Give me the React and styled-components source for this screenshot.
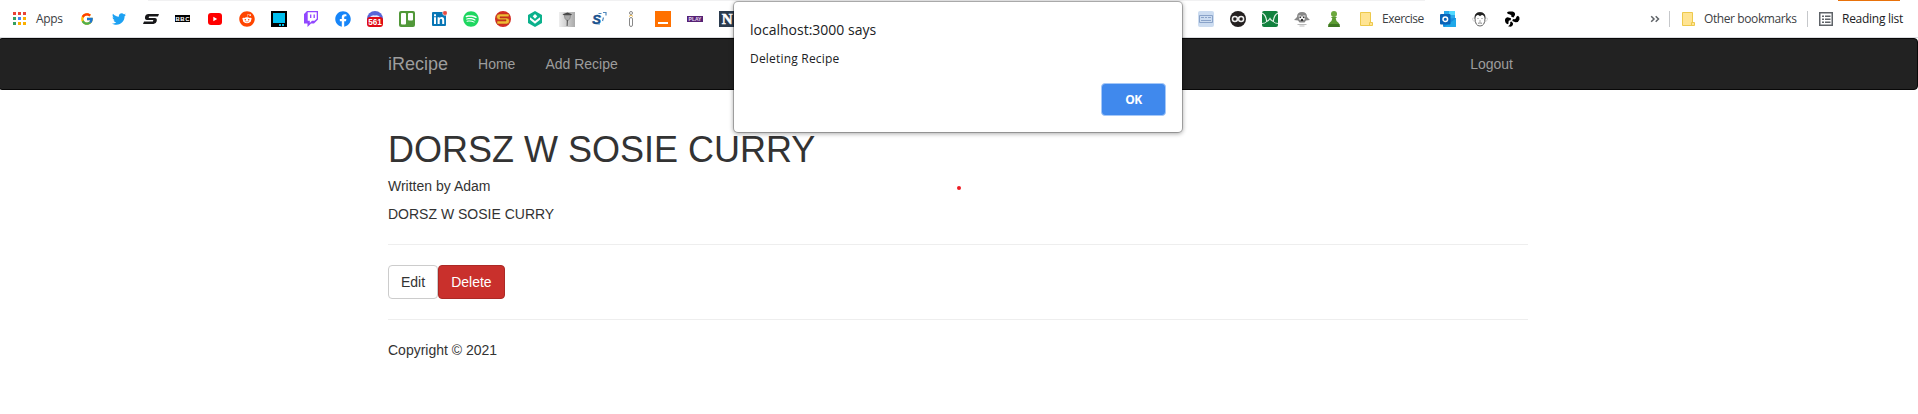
import React from "react";
import styled, { createGlobalStyle } from "styled-components";
import { FcGoogle } from "react-icons/fc";
import { FaTwitter, FaReddit, FaFacebook, FaSpotify } from "react-icons/fa";

const GlobalStyle = createGlobalStyle`
  *, *::before, *::after { box-sizing: border-box; }
  html, body { margin: 0; overflow: hidden; background: #fff; }
  body {
    font-family: "Liberation Sans", Arial, sans-serif;
    font-size: 14px;
    line-height: 20px;
    color: #333;
  }
`;

const uiFont = `"Open Sans", "Noto Sans", sans-serif`;

const Screen = styled.div`
  position: relative;
  width: 1918px;
  height: 414px;
  overflow: hidden;
`;

const TabStrip = styled.div`
  display: flex;
  justify-content: space-between;
  height: 1px;
  padding: 0 18px 0 148px;
`;

const StripEdge = styled.div`
  width: ${(p) => p.$width}px;
  height: 1px;
  background: ${(p) => p.$color};
`;

const BookmarksBar = styled.div`
  display: flex;
  align-items: center;
  height: 37px;
  padding: 0 15px 0 11px;
  border-bottom: 1px solid #dcdde0;
  background: #fff;
`;

const Favicons = styled.div`
  display: flex;
  align-items: center;
  gap: 16px;
  margin-left: ${(p) => p.$left}px;
`;

const Icon = styled.svg.attrs({ viewBox: "0 0 16 16" })`
  display: block;
  flex: none;
  width: 16px;
  height: 16px;
`;

const BrandIcon = styled.span`
  display: flex;
  flex: none;
  align-items: center;
  justify-content: center;
  width: 16px;
  height: 16px;
  color: ${(p) => p.$color};
  font-size: ${(p) => p.$size || 16}px;
  svg { flex: none; }
`;

const BarLabel = styled.span`
  flex: none;
  width: ${(p) => p.$width}px;
  margin-left: ${(p) => p.$left}px;
  font: 12px/16px ${uiFont};
  letter-spacing: ${(p) => p.$spacing || 0}px;
  white-space: nowrap;
  color: ${(p) => p.$color || "#3c4043"};
`;

const BarEnd = styled.div`
  display: flex;
  align-items: center;
  margin-left: auto;
`;

const Divider = styled.div`
  width: 1px;
  height: 16px;
  margin: 0 ${(p) => p.$right}px 0 ${(p) => p.$left}px;
  background: #c6c8cb;
`;

const Navbar = styled.nav`
  height: 52px;
  margin: 0 0 40px -2px;
  width: 1920px;
  border: 1px solid #080808;
  border-radius: 4px;
  background: #222;
`;

const NavInner = styled.div`
  display: flex;
  align-items: center;
  width: 1140px;
  height: 50px;
  margin-left: 389px;
  color: #9d9d9d;
`;

const Brand = styled.a`
  padding-right: 15px;
  font-size: 18px;
`;

const NavLink = styled.a`
  padding: 0 15px;
  margin-left: ${(p) => (p.$right ? "auto" : 0)};
`;

const Container = styled.main`
  width: 1140px;
  margin-left: 388px;
`;

const Title = styled.h1`
  margin: 0 0 6px;
  font-size: 36px;
  font-weight: 500;
  line-height: 40px;
`;

const Paragraph = styled.p`
  margin: 0 0 ${(p) => p.$gap || 0}px;
`;

const Rule = styled.hr`
  margin: 20px 0;
  border: 0;
  border-top: 1px solid #eee;
`;

const Actions = styled.div`
  display: flex;
`;

const Button = styled.button`
  height: 34px;
  padding: 6px 12px;
  border: 1px solid ${(p) => (p.$danger ? "#ac2925" : "#ccc")};
  border-radius: 4px;
  background: ${(p) => (p.$danger ? "#c9302c" : "#fff")};
  color: ${(p) => (p.$danger ? "#fff" : "#333")};
  font: inherit;
`;

const Dialog = styled.div`
  position: absolute;
  top: 2px;
  left: 734px;
  display: flex;
  flex-direction: column;
  width: 448px;
  height: 130px;
  padding: 17px 16px 16px;
  border-radius: 4px;
  background: #fff;
  box-shadow: 0 0 0 1px rgba(0, 0, 0, 0.24), 0 1px 4px 1px rgba(0, 0, 0, 0.32);
  font-family: ${uiFont};
  color: #202124;
`;

const DialogTitle = styled.div`
  font-size: 14px;
  line-height: 22px;
  white-space: nowrap;
`;

const DialogMessage = styled.div`
  margin-top: 9px;
  font-size: 12px;
  line-height: 18px;
  letter-spacing: 0.2px;
  white-space: nowrap;
`;

const DialogButton = styled.button`
  align-self: flex-end;
  width: 65px;
  height: 33px;
  margin-top: auto;
  padding: 0;
  border: 1px solid #a5c8f8;
  border-radius: 4px;
  background: #4089ed;
  color: #fff;
  font: 700 12px/16px ${uiFont};
  letter-spacing: -0.6px;
`;

const Pointer = styled.div`
  position: absolute;
  top: 186px;
  left: 957px;
  width: 4px;
  height: 4px;
  border-radius: 50%;
  background: #ec1c24;
`;

const appColors = ["#ea4335", "#ea4335", "#ea4335", "#34a060", "#4285f4", "#fbaf00", "#34a060", "#fbaf00", "#fbaf00"];

const AppsIcon = () => (
  <Icon>
    {appColors.map((c, i) => (
      <rect key={i} x={2 + (i % 3) * 5} y={1 + Math.floor(i / 3) * 5} width="3" height="3" fill={c} />
    ))}
  </Icon>
);

const FolderIcon = () => (
  <Icon>
    <path d="M2.5 1.5H12.5V11.5H14.5V14.5H2.5Z" fill="#ffe493" stroke="#edc94c" />
    <path d="M11.5 14.5V11.5H13" fill="none" stroke="#edc94c" />
  </Icon>
);

const ReadingListIcon = () => (
  <Icon>
    <rect x="1.75" y="1.75" width="12.5" height="12.5" fill="none" stroke="#5f6368" strokeWidth="1.5" />
    <path d="M4 5.3H6M7 5.3H12.5M4 8.3H6M7 8.3H12.5M4 11.3H6M7 11.3H12.5" stroke="#5f6368" strokeWidth="1.4" />
  </Icon>
);

const Letters = ({ children, ...rest }) => (
  <text textAnchor="middle" fontFamily="Liberation Sans, sans-serif" fontWeight="700" {...rest}>
    {children}
  </text>
);

const LeftFavicons = () => (
  <>
    <BrandIcon $size={14}><FcGoogle /></BrandIcon>
    <BrandIcon $color="#1da1f2" $size={14}><FaTwitter /></BrandIcon>
    <Icon>
      <path d="M16 3H5.5Q2.5 3 2 6Q1.6 8.9 4 8.9H10.3L9.9 10.4H1L0 13H10.5Q13 13 13.7 10.3Q14.4 7 11.8 7H5.7L6 5.5H15Z" fill="#171719" />
    </Icon>
    <Icon>
      <rect x="0" y="4" width="15" height="7" fill="#000" />
      {["B", "B", "C"].map((c, i) => (
        <Letters key={i} x={2.7 + i * 4.8} y="9.8" fontSize="6" fill="#fff">{c}</Letters>
      ))}
    </Icon>
    <Icon>
      <rect x="1" y="2" width="14" height="12" rx="3" fill="#f00" />
      <path d="M6.3 5.7L10.2 8L6.3 10.3Z" fill="#fff" />
    </Icon>
    <BrandIcon $color="#ff4500"><FaReddit /></BrandIcon>
    <Icon>
      <rect width="16" height="16" />
      <rect x="2" y="2" width="12" height="10" fill="#00bfee" />
      <path d="M8 13h2v2h-2zM11 13h2v2h-2z" fill="#00bfee" />
    </Icon>
    <Icon>
      <path d="M4 0H15V8.5L11 12.5H8L4.5 16V12.5H1V3Z" fill="#9147ff" />
      <path d="M4.7 1.2H13.7V7.7L11.5 9.8H9L6.8 12V9.8H4.7Z" fill="#fff" />
      <path d="M7.7 3.5V7M11.2 3.5V7" stroke="#9147ff" strokeWidth="1.3" />
    </Icon>
    <BrandIcon $color="#1685f8"><FaFacebook /></BrandIcon>
    <Icon>
      <circle cx="8" cy="8" r="8" fill="#5865d8" />
      <path d="M3 6Q5 3.8 8 4.5Q11 3.8 13 6V8H3Z" fill="#e7e9fb" />
      <rect x="0" y="6" width="16" height="10" rx="3" fill="#df0b16" />
      <Letters x="8" y="14" fontSize="8.2" fill="#fff">561</Letters>
    </Icon>
    <Icon>
      <rect width="16" height="16" rx="2" fill="#519839" />
      <rect x="2" y="2" width="5" height="11.5" rx="1" fill="#fff" />
      <rect x="9" y="2" width="5" height="7.5" rx="1" fill="#fff" />
    </Icon>
    <Icon>
      <rect x="1" y="1" width="14" height="14" rx="1" fill="#0876b5" />
      <path d="M3 6.3H5V13H3zM3 3.3H5V5.2H3zM6.6 6.3H8.6V7.2Q9.3 6.1 10.8 6.1Q13.2 6.1 13.2 9V13H11.2V9.4Q11.2 7.8 10 7.8Q8.7 7.8 8.7 9.5V13H6.6Z" fill="#fff" />
      <circle cx="14" cy="2" r="2.4" fill="#e74a40" stroke="#fff" strokeWidth=".6" />
    </Icon>
    <BrandIcon $color="#1ed760"><FaSpotify /></BrandIcon>
    <Icon>
      <circle cx="8" cy="8" r="8" fill="#d52d25" />
      <path d="M14 3H4.5Q1.5 3 1.5 5.7Q1.5 8.7 4.5 8.7H11V10H2V13H11.5Q14.5 13 14.5 10Q14.5 7 11.5 7H5V5.8H14Z" fill="#f2ba35" stroke="#a43213" strokeWidth=".5" />
    </Icon>
    <Icon>
      <path d="M8 0L15 4V12L8 16L1 12V4Z" fill="#0bb18c" />
      <path d="M3 6.2L8 10L13 6.2V8.8L8 12.8L3 8.8Z" fill="#fff" />
      <path d="M8 3L10.3 5.3L8 7.8L5.7 5.3Z" fill="#fff" />
    </Icon>
    <Icon>
      <defs>
        <linearGradient id="photo"><stop stopColor="#eee" /><stop offset="1" stopColor="#aaa" /></linearGradient>
      </defs>
      <rect y="1" width="16" height="15" fill="url(#photo)" />
      <path d="M3.5 3.2L8.5 1.5L13 3.2L12 4.3H5Z" fill="#444" />
      <path d="M5.3 4.3H11.5L11 7.2L9.3 9.5H7.8L6 7.5Z" fill="#aaa" stroke="#777" strokeWidth=".6" />
      <path d="M7.8 8.5L9 9.5L8.6 15H7.6Z" fill="#555" />
    </Icon>
    <Icon>
      <Letters x="5.5" y="12.8" fontSize="13" fontStyle="italic" stroke="#17518d" strokeWidth=".5" fill="#17518d">S</Letters>
      <path d="M7.5 2.5H10.5M12 1.5H15V4.5M9 13H6.5M12.5 6.5L11.5 10" stroke="#5089bd" strokeWidth="1.2" fill="none" />
    </Icon>
    <Icon>
      <circle cx="8" cy="2" r="1.5" fill="#fff" stroke="#888" />
      <path d="M6 5.5L8 4L10 5.5" fill="none" stroke="#efb94c" />
      <rect x="6.5" y="6.5" width="3" height="9" rx="1.5" fill="#fff" stroke="#888" />
    </Icon>
    <Icon>
      <rect width="16" height="16" fill="#ff7100" />
      <rect x="3" y="11" width="10" height="2" fill="#fff" />
    </Icon>
    <Icon>
      <rect y="5" width="16" height="6" fill="#562274" />
      <Letters x="8" y="10" fontSize="5" fill="#e8d8f2">PLAY</Letters>
    </Icon>
    <Icon>
      <rect width="16" height="16" fill="#2b3b4e" />
      <Letters x="8.2" y="13.3" fontSize="15" fill="#fff" stroke="#fff" strokeWidth=".5" fontFamily="Liberation Serif, serif">N</Letters>
    </Icon>
  </>
);

const RightFavicons = () => (
  <>
    <Icon>
      <rect width="16" height="16" rx="2" fill="#ccdcf0" />
      <path d="M1.5 4.5H14.5V11.5H1.5Z" fill="none" stroke="#8aa3c9" />
      <path d="M3 6.5H6M7 6.5H9M10 6.5H13M3 9.5H13" fill="none" stroke="#8aa3c9" />
    </Icon>
    <Icon>
      <circle cx="8" cy="8" r="8" fill="#242020" />
      <circle cx="4.9" cy="8" r="2.5" fill="none" stroke="#eee" strokeWidth="1.5" />
      <circle cx="11.1" cy="8" r="2.5" fill="none" stroke="#eee" strokeWidth="1.5" />
      <path d="M6.7 9.8L9.3 6.2" stroke="#eee" strokeWidth="1.3" />
    </Icon>
    <Icon>
      <rect width="16" height="16" rx="2" fill="#12813e" />
      <path d="M0 2Q4 3.5 4.7 10.5Q6.5 10 8 7.5Q9.5 10 11.3 10.5Q12 3.5 16 2" fill="none" stroke="#e4f3e9" strokeWidth="1.2" />
      <path d="M0 12.5Q3 12.5 4.7 10.5M16 12.5Q13 12.5 11.3 10.5" fill="none" stroke="#e4f3e9" strokeWidth=".9" />
    </Icon>
    <Icon>
      <path d="M3 6Q3 1 8 1Q13 1 13 6L16 9L12 9.5L10.5 11.5H5.5L4 9.5L0 9Z" fill="#888" />
      <path d="M4.5 4.5H7L8 6L9 4.5H11.5L10.5 9H5.5Z" fill="#eee" />
      <path d="M5.5 5.5H7V7H5.5zM9 5.5H10.5V7H9zM7 8H9V10H7z" fill="#333" />
      <path d="M3.5 13.5H12.5M5.5 15H10.5" stroke="#bbb" />
    </Icon>
    <Icon>
      <circle cx="8" cy="3" r="3" fill="#6ca83d" />
      <path d="M4.8 6H11.2L9.7 7.3Q9.8 10 12.5 11.7Q14 13 13.8 16H2.2Q2 13 3.5 11.7Q6.2 10 6.3 7.3Z" fill="#5b9b32" />
      <path d="M2.7 13H13.3L13.8 16H2.2Z" fill="#3e7822" />
    </Icon>
  </>
);

const OutlookIcon = () => (
  <Icon>
    <path d="M4 0H15V8H4Z" fill="#28a8ea" />
    <path d="M9 0H15V4H9Z" fill="#50d9ff" />
    <path d="M3 8L16 7V15Q16 16 15 16H4Q3 16 3 15Z" fill="#148ede" />
    <path d="M4 16L16 7.5V15Q16 16 15 16Z" fill="#1fa8e9" />
    <rect y="3" width="10.5" height="10.5" rx="1" fill="#0a64b8" />
    <circle cx="5.3" cy="8.2" r="2.3" fill="none" stroke="#fff" strokeWidth="1.5" />
  </Icon>
);

const FaceIcon = () => (
  <Icon>
    <path d="M2.5 7.5Q-.2 6 .8 8.8Q1.5 11 3 10M13.5 7.5Q16.2 6 15.2 8.8Q14.5 11 13 10" fill="none" stroke="#ccc" strokeWidth=".8" />
    <path d="M3 7Q3 1.5 8 1.5Q13 1.5 13 7Q13 15 8 15Q3 15 3 7Z" fill="#fff" stroke="#555" strokeWidth=".9" />
    <path d="M2.7 8Q2 1.2 8 1.2Q14 1.2 13.3 8Q12.7 4.7 10.5 4Q9 4 8 5.2Q7 4 5.5 4Q3.3 4.7 2.7 8Z" fill="#222" />
    <path d="M5.5 7.5H6.5M9.5 7.5H10.5M7.3 10H8.7M6 12.3Q8 11.5 10 12.3" stroke="#666" strokeWidth=".8" fill="none" />
  </Icon>
);

const PinwheelIcon = () => (
  <Icon>
    <path d="M3 2Q3 .5 5 .5H8.5Q11.5 1 11 4L9.5 6.5L7.3 5.7Q8 3.8 6 3.4Q4 3.2 3 2Z" fill="#000" />
    <path d="M15.5 8.5Q14.5 11.5 11.5 11.3L8.3 10L9 8Q11.3 9 12 7Q12.3 5 14 4.7Q16 6 15.5 8.5Z" fill="#000" />
    <path d="M1 10Q.7 7 3.5 6.3L7 7.2L6.7 9.2Q4.3 8.8 4.5 11Q5 13.3 3.4 13.3Q1.3 12.3 1 10Z" fill="#000" />
    <path d="M7.5 10.5L9 12.3Q9.3 15 6.5 15.7L4 15.3Q6.8 14 6.2 11Z" fill="#000" />
  </Icon>
);

const OverflowIcon = () => (
  <Icon>
    <path d="M4.2 5.2L7 8L4.2 10.8M8.7 5.2L11.5 8L8.7 10.8" fill="none" stroke="#5f6368" strokeWidth="1.5" />
  </Icon>
);

export default function App() {
  return (
    <Screen>
      <GlobalStyle />
      <TabStrip>
        <StripEdge $width={1277} $color="#f1f1f2" />
        <StripEdge $width={62} $color="#e8710a" />
      </TabStrip>
      <BookmarksBar>
        <AppsIcon />
        <BarLabel $left={9} $width={43} $spacing={-0.3}>Apps</BarLabel>
        <Favicons $left={0}><LeftFavicons /></Favicons>
        <Favicons $left={463}><RightFavicons /><FolderIcon /></Favicons>
        <BarLabel $left={8} $width={42} $spacing={-0.5}>Exercise</BarLabel>
        <Favicons $left={16}><OutlookIcon /><FaceIcon /><PinwheelIcon /></Favicons>
        <BarEnd>
          <OverflowIcon />
          <Divider $left={6} $right={10} />
          <FolderIcon />
          <BarLabel $left={8} $width={92} $spacing={-0.4}>Other bookmarks</BarLabel>
          <Divider $left={11} $right={10} />
          <ReadingListIcon />
          <BarLabel $left={8} $width={61} $spacing={-0.27} $color="#202124">Reading list</BarLabel>
        </BarEnd>
      </BookmarksBar>
      <Navbar>
        <NavInner>
          <Brand>iRecipe</Brand>
          <NavLink>Home</NavLink>
          <NavLink>Add Recipe</NavLink>
          <NavLink $right>Logout</NavLink>
        </NavInner>
      </Navbar>
      <Container>
        <Title>DORSZ W SOSIE CURRY</Title>
        <Paragraph $gap={8}>Written by Adam</Paragraph>
        <Paragraph>DORSZ W SOSIE CURRY</Paragraph>
        <Rule />
        <Actions>
          <Button>Edit</Button>
          <Button $danger>Delete</Button>
        </Actions>
        <Rule />
        <Paragraph>Copyright © 2021</Paragraph>
      </Container>
      <Pointer />
      <Dialog>
        <DialogTitle>localhost:3000 says</DialogTitle>
        <DialogMessage>Deleting Recipe</DialogMessage>
        <DialogButton>OK</DialogButton>
      </Dialog>
    </Screen>
  );
}
